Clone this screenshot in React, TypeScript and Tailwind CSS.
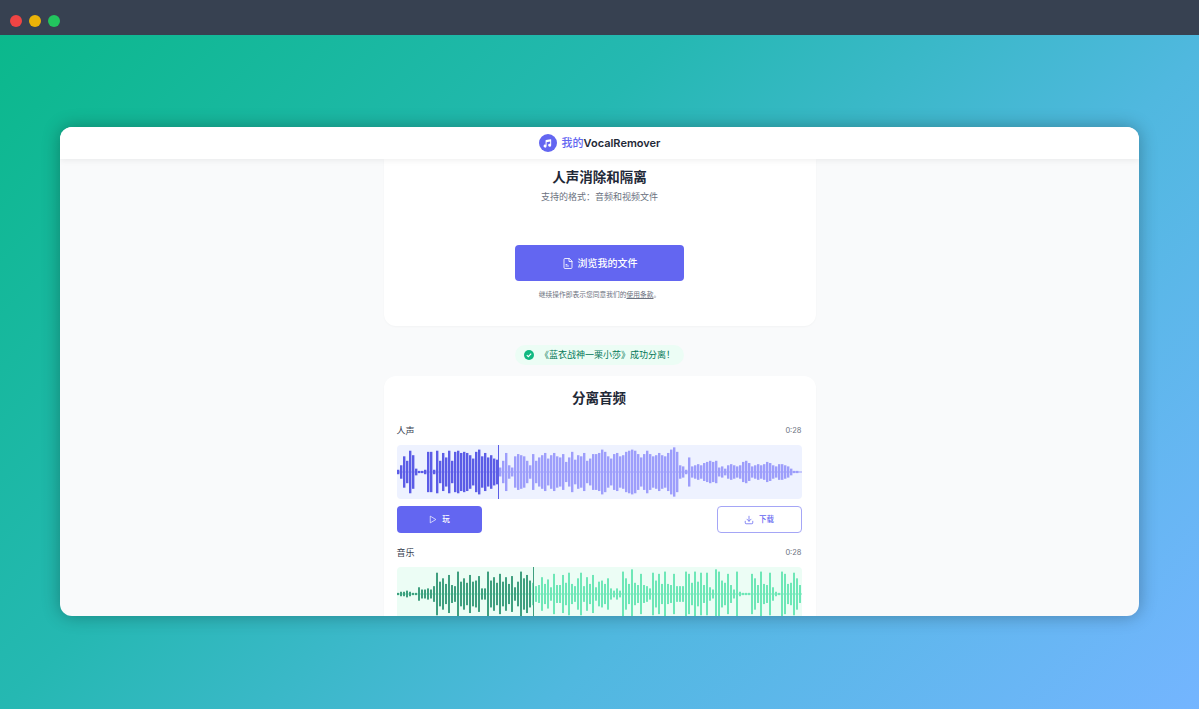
const FONT = "font-['Inter','Noto_Sans_CJK_SC',sans-serif]";

// half-heights of the bars, left of the cursor and right of it
const vocalPlayed = [2, 6, 14, 10, 19, 15, 3, 1, 1, 2, 18, 18, 2, 19, 10, 17, 13, 19, 10, 18, 19, 17, 18, 17, 15, 12, 18, 20, 14, 17, 13, 15, 12, 11];
const vocalRest = [
  4, 10, 17, 6, 4, 14, 16, 15, 14, 10, 6, 16, 10, 13, 15, 17, 12, 15, 17, 14, 13, 16, 9, 13, 18, 11, 15, 14, 17, 10, 12,
  16, 16, 17, 20, 18, 14, 12, 16, 17, 14, 15, 18, 19, 20, 19, 16, 13, 16, 19, 16, 14, 15, 17, 15, 14, 17, 20, 22, 18, 6, 5, 2,
  13, 5, 6, 7, 6, 8, 9, 10, 9, 10, 4, 5, 3, 6, 7, 6, 5, 6, 9, 10, 8, 5, 6, 7, 6, 7, 9, 8, 6, 5, 7, 7, 6, 5, 3, 1, 1,
];
const musicPlayed = [1, 2, 2, 3, 2, 1, 1, 6, 4, 4, 5, 4, 7, 19, 11, 14, 9, 17, 8, 7, 20, 11, 14, 10, 17, 11, 12, 16, 5, 5, 20, 12, 15, 10, 18, 11, 15, 9, 16, 6, 11, 20, 14, 17, 12];
const musicRest = [
  10, 7, 8, 15, 9, 13, 6, 18, 8, 8, 17, 10, 19, 9, 7, 14, 19, 7, 15, 9, 17, 6, 11,
  12, 9, 14, 5, 3, 5, 3, 20, 14, 9, 22, 10, 8, 18, 8, 7, 5, 19, 12, 18, 9, 20, 9, 8, 18, 7, 7, 7, 20, 18, 10, 20, 11, 19, 8, 19, 6, 4,
  22, 20, 12, 10, 18, 8, 4, 20, 2, 1, 1, 1, 18, 14, 8, 20, 9, 8, 19, 6, 2, 1, 20, 18, 9, 10, 19, 14, 8, 1,
];

function Waveform({ played, rest, cursor, bg, dark, light, barWidth }: { played: number[]; rest: number[]; cursor: number; bg: string; dark: string; light: string; barWidth: number }) {
  const bars = [...played.map((a) => ({ a, c: dark })), ...rest.map((a) => ({ a, c: light }))];
  return (
    <div className={`h-[54px] shrink-0 rounded-[4px] ${bg}`}>
      <svg width="405" height="54" viewBox="0 0 405 54" className="block overflow-hidden">
        <line x1="0" x2="405" y1="27" y2="27" stroke={light} strokeWidth="1" />
        {bars.map((b, i) => {
          const h = Math.min(26, b.a * 1.12);
          return <rect key={i} x={i * 3} y={27 - h} width={barWidth} height={h * 2} fill={b.c} />;
        })}
        <rect x={cursor} y="0" width="1" height="54" fill={dark} />
      </svg>
    </div>
  );
}

function Track({ name, children }: { name: string; children: React.ReactNode }) {
  return (
    <div className="flex flex-col">
      <div className="mb-[8px] flex h-[12px] items-center justify-between">
        <span className="text-[9px] text-[#374151]">{name}</span>
        <span className="text-[7.5px] text-[#6b7280]">0:28</span>
      </div>
      {children}
    </div>
  );
}

export default function App() {
  return (
    <div className={`flex h-[709px] w-[1199px] flex-col overflow-hidden ${FONT}`}>
      {/* Browser bar */}
      <div className="flex h-[35px] shrink-0 items-center gap-[7px] bg-[#374151] pl-[10px] pt-[7px]">
        <span className="size-[12px] rounded-full bg-[#ef4444]" />
        <span className="size-[12px] rounded-full bg-[#eab308]" />
        <span className="size-[12px] rounded-full bg-[#22c55e]" />
      </div>

      <main className="flex flex-1 items-center justify-center bg-[linear-gradient(135deg,#0bb88c_0%,#25b8b2_36%,#50b8df_65%,#74b5ff_100%)] px-[60px] pb-[1px]">
        <div className="flex h-[489px] w-full flex-col overflow-hidden rounded-[12px] bg-[#f9fafb] shadow-[0_0_18px_rgba(0,0,0,0.3)]">
          {/* Site header */}
          <header className="relative z-10 flex h-[32px] shrink-0 items-center justify-center gap-[5px] bg-white shadow-[0_2px_6px_rgba(0,0,0,0.06)]">
            <span className="flex size-[18px] items-center justify-center rounded-full bg-[#6366f1]">
              <svg width="11" height="11" viewBox="0 0 24 24" fill="white">
                <path d="M20 3.5v12.2a3.3 3.3 0 1 1-2.2-3.1V7.6L10 9.4v8.3a3.3 3.3 0 1 1-2.2-3.1V5.6a1 1 0 0 1 .8-1L18.8 2.5A1 1 0 0 1 20 3.5z" />
              </svg>
            </span>
            <span className="text-[11px] font-semibold leading-none text-[#1f2937]">
              <span className="font-medium text-[#6366f1]">我的</span>VocalRemover
            </span>
          </header>

          <div className="flex min-h-0 flex-1 flex-col items-center overflow-hidden">
            {/* Upload card */}
            <section className="flex h-[167px] w-[432px] shrink-0 flex-col items-center rounded-b-[12px] bg-white pt-[9px] shadow-[0_1px_2px_rgba(0,0,0,0.03)]">
              <h1 className="text-[13.5px] font-semibold leading-[18px] text-[#1f2937]">人声消除和隔离</h1>
              <p className="mt-[4px] text-[9px] leading-[14px] text-[#6b7280]">支持的格式：音频和视频文件</p>
              <button className="mt-[41px] flex h-[36px] w-[169px] items-center justify-center gap-[4px] rounded-[4px] bg-[#6366f1] text-[10px] font-medium text-white">
                <svg width="12" height="13" viewBox="0 0 24 24" fill="none" stroke="currentColor" strokeWidth="1.7" strokeLinejoin="round" strokeLinecap="round">
                  <path d="M14 2H6a2 2 0 0 0-2 2v16a2 2 0 0 0 2 2h12a2 2 0 0 0 2-2V8z" />
                  <path d="M14 2v6h6" />
                  <path d="M8 17h5M8 14h2" />
                </svg>
                浏览我的文件
              </button>
              <p className="mt-[8px] text-[6.75px] leading-[12px] text-[#6b7280]">
                继续操作即表示您同意我们的<span className="underline">使用条款</span>。
              </p>
            </section>

            {/* Success badge */}
            <div className="mt-[19px] flex h-[20px] w-[169px] shrink-0 items-center justify-center gap-[6px] rounded-full bg-[#ecfdf5] text-[9px] text-[#047857]">
              <svg width="10" height="10" viewBox="0 0 10 10">
                <circle cx="5" cy="5" r="5" fill="#10b981" />
                <path d="M2.8 5.1l1.5 1.5 2.9-3" fill="none" stroke="white" strokeWidth="1.1" />
              </svg>
              《蓝衣战神一栗小莎》成功分离！
            </div>

            {/* Separated tracks */}
            <section className="mt-[11px] flex w-[432px] shrink-0 flex-col rounded-[12px] bg-white pl-[13px] pr-[14px] pt-[12px] pb-[20px] shadow-[0_1px_2px_rgba(0,0,0,0.03)]">
              <h2 className="text-center text-[13.5px] font-semibold leading-[20px] text-[#1f2937]">分离音频</h2>
              <div className="mt-[17px]">
                <Track name="人声">
                  <Waveform played={vocalPlayed} rest={vocalRest} cursor={101} bg="bg-[#eef2ff]" dark="#5b5ce6" light="#9d9efb" barWidth={2.4} />
                  <div className="mt-[7px] flex justify-between">
                    <button className="flex h-[27px] w-[85px] items-center justify-center gap-[5px] rounded-[4px] bg-[#6366f1] text-[7.5px] font-medium text-white">
                      <svg width="9" height="9" viewBox="0 0 24 24" fill="none" stroke="currentColor" strokeWidth="1.8" strokeLinejoin="round">
                        <path d="M6 3l15 9-15 9z" />
                      </svg>
                      玩
                    </button>
                    <button className="flex h-[27px] w-[85px] items-center justify-center gap-[5px] rounded-[4px] border border-[#a5a6f6] bg-white text-[7.5px] font-medium text-[#6366f1]">
                      <svg width="10" height="10" viewBox="0 0 24 24" fill="none" stroke="currentColor" strokeWidth="1.8" strokeLinecap="round" strokeLinejoin="round">
                        <path d="M21 15v4a2 2 0 0 1-2 2H5a2 2 0 0 1-2-2v-4M7 10l5 5 5-5M12 15V3" />
                      </svg>
                      下载
                    </button>
                  </div>
                </Track>
              </div>
              <div className="mt-[14px]">
                <Track name="音乐">
                  <Waveform played={musicPlayed} rest={musicRest} cursor={136} bg="bg-[#ecfdf5]" dark="#3f9f7f" light="#6ee7b7" barWidth={2} />
                </Track>
              </div>
            </section>
          </div>
        </div>
      </main>
    </div>
  );
}
